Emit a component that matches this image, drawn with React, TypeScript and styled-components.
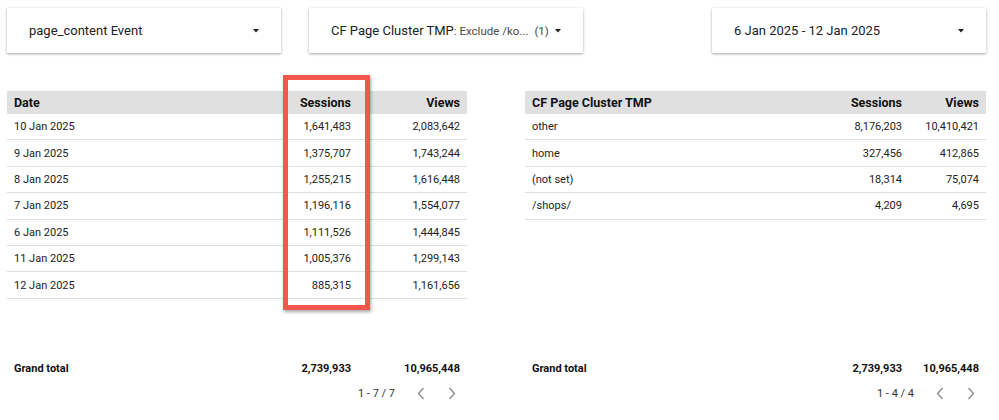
import React from 'react';
import styled, { createGlobalStyle } from 'styled-components';

const GlobalStyle = createGlobalStyle`
  body {
    margin: 0;
    background: #ffffff;
    font-family: Roboto, "Liberation Sans", Arial, sans-serif;
    color: #212121;
  }
`;

interface Column {
  label: string;
  width: string;
}

interface TableData {
  columns: Column[];
  rows: string[][];
  total: string[];
  range: string;
  highlight?: boolean;
}

const dateTable: TableData = {
  columns: [
    { label: 'Date', width: '1fr' },
    { label: 'Sessions', width: '110px' },
    { label: 'Views', width: '109px' },
  ],
  rows: [
    ['10 Jan 2025', '1,641,483', '2,083,642'],
    ['9 Jan 2025', '1,375,707', '1,743,244'],
    ['8 Jan 2025', '1,255,215', '1,616,448'],
    ['7 Jan 2025', '1,196,116', '1,554,077'],
    ['6 Jan 2025', '1,111,526', '1,444,845'],
    ['11 Jan 2025', '1,005,376', '1,299,143'],
    ['12 Jan 2025', '885,315', '1,161,656'],
  ],
  total: ['Grand total', '2,739,933', '10,965,448'],
  range: '1 - 7 / 7',
  highlight: true,
};

const clusterTable: TableData = {
  columns: [
    { label: 'CF Page Cluster TMP', width: '1fr' },
    { label: 'Sessions', width: '100px' },
    { label: 'Views', width: '77px' },
  ],
  rows: [
    ['other', '8,176,203', '10,410,421'],
    ['home', '327,456', '412,865'],
    ['(not set)', '18,314', '75,074'],
    ['/shops/', '4,209', '4,695'],
  ],
  total: ['Grand total', '2,739,933', '10,965,448'],
  range: '1 - 4 / 4',
};

const Caret = () => (
  <svg width="6" height="4" viewBox="0 0 6 4">
    <path d="M0 0 L6 0 L3 3.5 Z" fill="#202124" />
  </svg>
);

const Chevron = ({ dir }: { dir: 'left' | 'right' }) => (
  <svg width="8" height="13" viewBox="0 0 8 13">
    <path
      d={dir === 'left' ? 'M6.5 1 L1.5 6.5 L6.5 12' : 'M1.5 1 L6.5 6.5 L1.5 12'}
      fill="none"
      stroke="#8a8a8a"
      strokeWidth="1.3"
    />
  </svg>
);

const DataTable = ({ data, width }: { data: TableData; width: number }) => {
  const template = data.columns.map(c => c.width).join(' ');
  return (
    <TableCard style={{ width }}>
      {data.highlight && <Highlight />}
      <HeaderRow cols={template}>
        {data.columns.map((c, i) => (
          <Cell key={c.label} right={i > 0}>
            {c.label}
          </Cell>
        ))}
      </HeaderRow>
      <Body>
        {data.rows.map(row => (
          <Row key={row[0]} cols={template}>
            {row.map((v, i) => (
              <Cell key={i} right={i > 0}>
                {v}
              </Cell>
            ))}
          </Row>
        ))}
      </Body>
      <TotalRow cols={template}>
        {data.total.map((v, i) => (
          <Cell key={i} right={i > 0}>
            {v}
          </Cell>
        ))}
      </TotalRow>
      <Pager>
        <PagerText>{data.range}</PagerText>
        <PagerButton>
          <Chevron dir="left" />
        </PagerButton>
        <PagerButton>
          <Chevron dir="right" />
        </PagerButton>
      </Pager>
    </TableCard>
  );
};

const App = () => (
  <>
    <GlobalStyle />
    <Page>
      <FilterBar>
        <Control>
          <ControlLabel>page_content Event</ControlLabel>
          <Caret />
        </Control>
        <Control push>
          <ControlLabel>
            CF Page Cluster TMP<Muted>: Exclude /ko...</Muted>
          </ControlLabel>
          <Count>(1)</Count>
          <Caret />
        </Control>
        <Control>
          <ControlLabel>6 Jan 2025 - 12 Jan 2025</ControlLabel>
          <Caret />
        </Control>
      </FilterBar>
      <Tables>
        <DataTable data={dateTable} width={460} />
        <DataTable data={clusterTable} width={461} />
      </Tables>
    </Page>
  </>
);

export default App;

const Page = styled.div`
  width: 999px;
  height: 420px;
  padding: 8px 0 0 7px;
  box-sizing: border-box;
`;

const FilterBar = styled.div`
  display: flex;
  gap: 28px;
  width: 979px;
`;

const Control = styled.div<{ push?: boolean }>`
  display: flex;
  align-items: center;
  width: 274px;
  height: 45px;
  box-sizing: border-box;
  padding: 0 22px 0 22px;
  background: #fff;
  box-shadow: 0 1px 3px rgba(0, 0, 0, 0.28), 0 1px 1px rgba(0, 0, 0, 0.08);
  margin-right: ${({ push }) => (push ? 'auto' : '0')};

  svg {
    margin-left: auto;
  }
`;

const ControlLabel = styled.span`
  font-size: 13px;
  color: #202124;
  white-space: nowrap;
`;

const Muted = styled.span`
  font-size: 11.5px;
  color: #4a4a4a;
`;

const Count = styled.span`
  font-size: 11.5px;
  color: #4a4a4a;
  margin-left: 6px;
`;

const Tables = styled.div`
  display: flex;
  gap: 58px;
  margin-top: 38px;
`;

const TableCard = styled.div`
  position: relative;
  display: flex;
  flex-direction: column;
`;

const Highlight = styled.div`
  position: absolute;
  left: 276px;
  top: -16px;
  width: 87px;
  height: 235px;
  box-sizing: border-box;
  border: 5px solid #f2574b;
  box-shadow: 1px 2px 3px rgba(0, 0, 0, 0.35);
  z-index: 2;
`;

const GridRow = styled.div<{ cols: string }>`
  display: grid;
  grid-template-columns: ${({ cols }) => cols};
  align-items: center;
  box-sizing: border-box;
`;

const HeaderRow = styled(GridRow)`
  height: 23px;
  background: #e0e0e0;
  font-size: 12.5px;
  font-weight: 700;
  color: #111;
`;

const Body = styled.div`
  height: 241px;
`;

const Row = styled(GridRow)`
  height: 26.4px;
  border-bottom: 1px solid #dedede;
  font-size: 11px;
  color: #222;
`;

const TotalRow = styled(GridRow)`
  height: 26px;
  font-size: 11px;
  font-weight: 700;
  color: #111;
`;

const Cell = styled.div<{ right?: boolean }>`
  padding: 0 7px;
  text-align: ${({ right }) => (right ? 'right' : 'left')};
  white-space: nowrap;
`;

const Pager = styled.div`
  display: flex;
  align-items: center;
  justify-content: flex-end;
  height: 24px;
`;

const PagerText = styled.span`
  font-size: 11px;
  color: #333;
  margin-right: 10px;
`;

const PagerButton = styled.span`
  display: flex;
  align-items: center;
  justify-content: center;
  width: 31px;
  height: 20px;
`;
